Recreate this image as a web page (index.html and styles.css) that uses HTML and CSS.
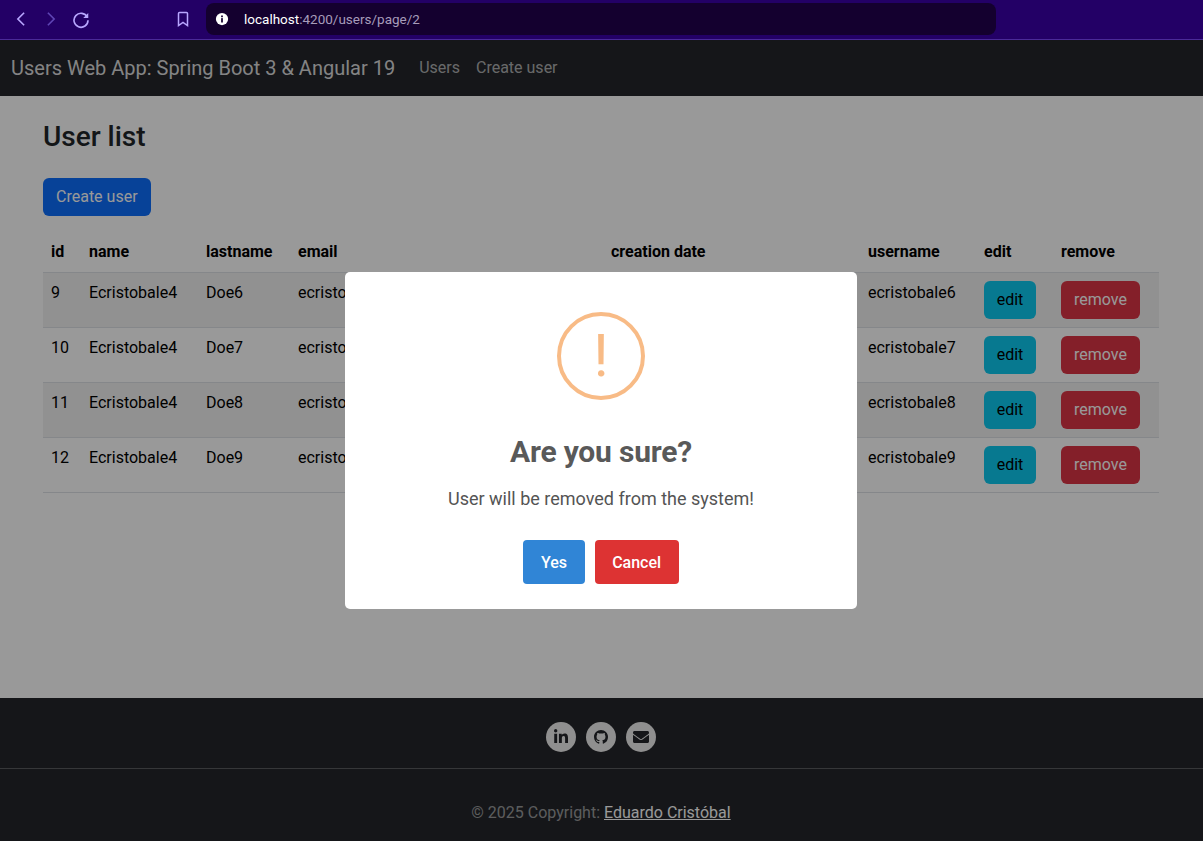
FILE: index.html
```html
<!DOCTYPE html>
<html lang="en">
<head>
<meta charset="utf-8">
<title>Users Web App</title>
<link rel="stylesheet" href="styles.css">
</head>
<body>
<div class="browser-bar">
  <div class="browser-nav">
    <svg class="bicon" viewBox="0 0 16 16"><path d="M10.500 3 5.500 8l5 5"/></svg>
    <svg class="bicon dim" viewBox="0 0 16 16"><path d="M5.500 3l5 5-5 5"/></svg>
    <svg class="bicon" viewBox="0 0 16 16"><path d="M13 6.500A5.600 5.600 0 1 0 13.600 9"/><path class="fillp" d="M13.800 3.200v4h-4z"/></svg>
  </div>
  <svg class="bicon bookmark" viewBox="0 0 16 16"><path d="M3.500 2.500a1 1 0 0 1 1-1h7a1 1 0 0 1 1 1v12L8 11.500l-4.500 3z"/></svg>
  <div class="address">
    <svg class="info" viewBox="0 0 16 16"><circle cx="8" cy="8" r="7" fill="#fff"/><rect x="7" y="7" width="2" height="5" fill="#14002f"/><rect x="7" y="4" width="2" height="2" fill="#14002f"/></svg>
    <span class="url"><span class="host">localhost</span>:4200/users/page/2</span>
  </div>
</div>

<nav class="navbar">
  <a class="brand">Users Web App: Spring Boot 3 &amp; Angular 19</a>
  <a class="nav-link">Users</a>
  <a class="nav-link">Create user</a>
</nav>

<main class="content">
  <h2 class="title">User list</h2>
  <button class="btn btn-primary">Create user</button>
  <table class="table">
    <colgroup>
      <col class="c-id"><col class="c-name"><col class="c-last"><col class="c-email"><col class="c-date"><col class="c-user"><col class="c-edit"><col class="c-remove">
    </colgroup>
    <thead>
      <tr><th>id</th><th>name</th><th>lastname</th><th>email</th><th>creation date</th><th>username</th><th>edit</th><th>remove</th></tr>
    </thead>
    <tbody>
      <tr class="odd"><td>9</td><td>Ecristobale4</td><td>Doe6</td><td>ecristobale6@example.com</td><td>2025-03-01</td><td>ecristobale6</td><td><button class="btn btn-info">edit</button></td><td><button class="btn btn-danger">remove</button></td></tr>
      <tr><td>10</td><td>Ecristobale4</td><td>Doe7</td><td>ecristobale7@example.com</td><td>2025-03-01</td><td>ecristobale7</td><td><button class="btn btn-info">edit</button></td><td><button class="btn btn-danger">remove</button></td></tr>
      <tr class="odd"><td>11</td><td>Ecristobale4</td><td>Doe8</td><td>ecristobale8@example.com</td><td>2025-03-01</td><td>ecristobale8</td><td><button class="btn btn-info">edit</button></td><td><button class="btn btn-danger">remove</button></td></tr>
      <tr><td>12</td><td>Ecristobale4</td><td>Doe9</td><td>ecristobale9@example.com</td><td>2025-03-01</td><td>ecristobale9</td><td><button class="btn btn-info">edit</button></td><td><button class="btn btn-danger">remove</button></td></tr>
    </tbody>
  </table>
</main>

<footer class="footer">
  <div class="socials">
    <a class="social"><svg class="s-linkedin" viewBox="0 0 448 512"><path d="M100.28 448H7.4V148.9h92.88zM53.79 108.1C24.09 108.1 0 83.5 0 53.8a53.79 53.79 0 0 1 107.58 0c0 29.7-24.1 54.3-53.79 54.3zM447.9 448h-92.68V302.4c0-34.7-.7-79.2-48.29-79.2-48.29 0-55.69 37.7-55.69 76.7V448h-92.78V148.9h89.08v40.8h1.3c12.4-23.5 42.69-48.3 87.88-48.3 94 0 111.28 61.9 111.28 142.3V448z"/></svg></a>
    <a class="social"><svg class="s-github" viewBox="0 0 16 16"><path d="M8 0C3.58 0 0 3.58 0 8c0 3.54 2.29 6.53 5.47 7.59.4.07.55-.17.55-.38 0-.19-.01-.82-.01-1.49-2.01.37-2.53-.49-2.69-.94-.09-.23-.48-.94-.82-1.13-.28-.15-.68-.52-.01-.53.63-.01 1.08.58 1.23.82.72 1.21 1.87.87 2.33.66.07-.52.28-.87.51-1.07-1.78-.2-3.64-.89-3.64-3.95 0-.87.31-1.59.82-2.15-.08-.2-.36-1.02.08-2.12 0 0 .67-.21 2.2.82.64-.18 1.32-.27 2-.27.68 0 1.36.09 2 .27 1.53-1.04 2.2-.82 2.2-.82.44 1.1.16 1.92.08 2.12.51.56.82 1.27.82 2.15 0 3.07-1.87 3.75-3.65 3.95.29.25.54.73.54 1.48 0 1.07-.01 1.93-.01 2.2 0 .21.15.46.55.38A8.013 8.013 0 0016 8c0-4.42-3.58-8-8-8z"/></svg></a>
    <a class="social"><svg class="s-mail" viewBox="0 0 512 512"><path d="M502.3 190.8c3.9-3.1 9.7-.2 9.7 4.7V400c0 26.5-21.5 48-48 48H48c-26.5 0-48-21.5-48-48V195.6c0-5 5.7-7.8 9.7-4.7 22.4 17.4 52.1 39.5 154.1 113.6 21.1 15.4 56.7 47.8 92.2 47.6 35.7.3 72-32.8 92.3-47.6 102-74.1 131.6-96.3 154-113.7zM256 320c23.2.4 56.6-29.2 73.4-41.4 132.7-96.3 142.8-104.7 173.4-128.7 5.8-4.5 9.2-11.5 9.2-18.9v-19c0-26.5-21.5-48-48-48H48C21.5 64 0 85.5 0 112v19c0 7.4 3.4 14.3 9.2 18.9 30.6 23.9 40.7 32.4 173.4 128.7 16.8 12.2 50.2 41.8 73.4 41.4z"/></svg></a>
  </div>
  <div class="copyright">© 2025 Copyright: <a class="copy-link">Eduardo Cristóbal</a></div>
</footer>

<div class="backdrop">
  <div class="modal">
    <div class="warn-icon">!</div>
    <h2 class="modal-title">Are you sure?</h2>
    <p class="modal-text">User will be removed from the system!</p>
    <div class="modal-actions">
      <button class="mbtn mbtn-yes">Yes</button>
      <button class="mbtn mbtn-cancel">Cancel</button>
    </div>
  </div>
</div>
</body>
</html>
```
FILE: styles.css
```css
* { box-sizing: border-box; }
html, body { height: 100%; }
body {
  margin: 0;
  position: relative;
  display: flex;
  flex-direction: column;
  height: 841px;
  overflow: hidden;
  background: #fff;
  color: #212529;
  font-family: Roboto, "Liberation Sans", sans-serif;
  font-size: 16px;
  line-height: 1.5;
}

/* browser chrome */
.browser-bar {
  height: 40px;
  flex: none;
  display: flex;
  align-items: flex-start;
  background: #230066;
  border-bottom: 1px solid #4a2a98;
  padding: 3px 7px 0 11px;
}
.browser-nav { display: flex; gap: 10px; margin-top: 6px; width: 159px; }
.bicon { width: 20px; height: 20px; fill: none; stroke: #b8a6ff; stroke-width: 1.3; }
.bicon.dim { stroke: #5f45b5; }
.bicon .fillp { fill: #b8a6ff; stroke: none; }
.bookmark { width: 16px; height: 16px; stroke-width: 1.500; margin: 8px 15px 0 5px; }
.address {
  width: 790px;
  height: 32px;
  border-radius: 8px;
  background: #14002f;
  display: flex;
  align-items: center;
  padding-left: 9px;
}
.info { width: 14px; height: 14px; margin-right: 15px; }
.url { color: #a79cba; font-size: 13.5px; line-height: 20px; }
.host { color: #fff; }

/* navbar */
.navbar {
  height: 56px;
  flex: none;
  display: flex;
  align-items: center;
  background: #24262a;
  padding: 0 11px;
}
.brand { color: rgba(255, 255, 255, 0.85); font-size: 20px; margin-right: 16px; }
.nav-link { color: rgba(255, 255, 255, 0.65); padding: 8px; margin-top: -1px; }

/* content */
.content { flex: 1; padding: 24px 43px 0; }
.title { margin: 0 0 24px; font-size: 28px; font-weight: 500; line-height: 34px; }
.btn {
  font-family: inherit;
  font-size: 16px;
  line-height: 24px;
  padding: 6px 12px;
  border: 1px solid transparent;
  border-radius: 6px;
  height: 38px;
}
.btn-primary { background: #0d6efd; color: #fff; }
.btn-info { background: #0dcaf0; color: #000; width: 52px; padding: 6px 0; }
.btn-danger { background: #dc3545; color: #fff; }

.table { width: 1116px; border-collapse: collapse; table-layout: fixed; margin-top: 16px; }
.c-id { width: 38px; }
.c-name { width: 117px; }
.c-last { width: 92px; }
.c-email { width: 313px; }
.c-date { width: 257px; }
.c-user { width: 116px; }
.c-edit { width: 77px; }
.c-remove { width: 106px; }
th, td {
  padding: 8px;
  text-align: left;
  vertical-align: top;
  border-bottom: 1px solid #dee2e6;
  color: #000;
  white-space: nowrap;
}
th { font-weight: 700; height: 40px; }
td { height: 55px; }
.odd td { background: #f2f2f2; }

/* footer */
.footer { height: 143px; flex: none; background: #24262a; padding-right: 1px; }
.socials {
  height: 71px;
  margin-right: -1px;
  padding-right: 1px;
  display: flex;
  justify-content: center;
  gap: 10px;
  padding-top: 24px;
  border-bottom: 1px solid rgba(255, 255, 255, 0.25);
}
.social {
  width: 30px;
  height: 30px;
  border-radius: 50%;
  background: #eee;
  display: flex;
  align-items: center;
  justify-content: center;
  fill: #24262a;
}
.s-linkedin { width: 14px; height: 16px; }
.s-github { width: 14px; height: 14px; }
.s-mail { width: 16px; height: 16px; }
.copyright {
  text-align: center;
  color: rgba(255, 255, 255, 0.55);
  padding-top: 32px;
}
.copy-link { color: #fff; text-decoration: underline; }

/* modal overlay */
.backdrop {
  position: absolute;
  top: 40px;
  left: 0;
  right: 0;
  bottom: 0;
  padding-right: 1px;
  background: rgba(0, 0, 0, 0.4);
  display: flex;
  align-items: center;
  justify-content: center;
}
.modal {
  width: 512px;
  height: 337px;
  background: #fff;
  border-radius: 5px;
  padding-top: 40px;
  display: flex;
  flex-direction: column;
  align-items: center;
}
.warn-icon {
  width: 88px;
  height: 88px;
  flex: none;
  border: 4px solid #f8bb86;
  border-radius: 50%;
  color: #f8bb86;
  font-size: 60px;
  line-height: 80px;
  text-align: center;
}
.modal-title {
  margin: 30px 0 0;
  font-size: 30px;
  font-weight: 700;
  line-height: 44px;
  letter-spacing: -0.2px;
  color: #595959;
}
.modal-text {
  margin: 11px 0 0;
  font-size: 18px;
  line-height: 27px;
  color: #545454;
}
.modal-actions { display: flex; gap: 10px; margin-top: 28px; }
.mbtn {
  height: 44px;
  border: 0;
  border-radius: 4px;
  padding: 0 17.6px;
  color: #fff;
  font-family: inherit;
  font-size: 16px;
  font-weight: 500;
}
.mbtn-yes { background: #3085d6; }
.mbtn-cancel { background: #dd3333; }
```
